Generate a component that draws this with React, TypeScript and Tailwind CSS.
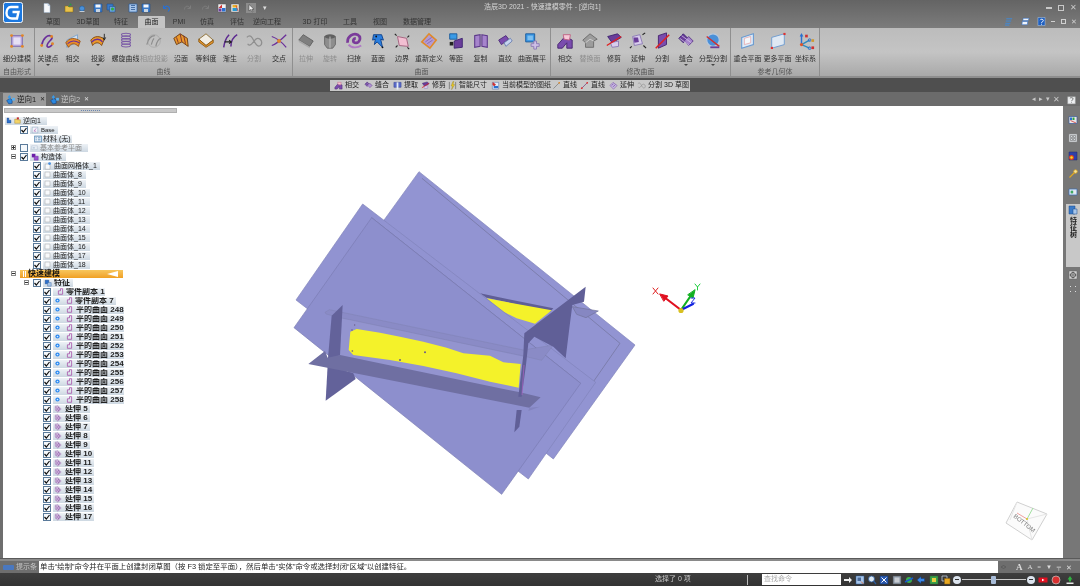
import React from "react";

const P = (d: string, fill: string, stroke = "none", sw = 1) => <path d={d} fill={fill} stroke={stroke} strokeWidth={sw} />;

const icons: Record<string, React.ReactNode> = {
  subd: <>{P("M4 4H16V16H4Z", "#b9a9dc", "#7f6fae")}{P("M6 6H14V14H6Z", "#e6e0f4")}<circle cx="4" cy="4" r="1.6" fill="#e0852a" /><circle cx="16" cy="4" r="1.6" fill="#e0852a" /><circle cx="4" cy="16" r="1.6" fill="#e0852a" /><circle cx="16" cy="16" r="1.6" fill="#e0852a" /></>,
  keypt: <>{P("M3 15C4 7 10 2 14 5C17 8 8 11 9 16C10 18 14 16 15 13", "none", "#6a2f9a", 1.8)}<circle cx="3" cy="15" r="1.6" fill="#e0852a" /><circle cx="14" cy="5" r="1.6" fill="#e0852a" /><circle cx="15" cy="13" r="1.6" fill="#e0852a" /></>,
  inter: <>{P("M3 9L15 3V11L3 17Z", "#cfe0f2", "#7ea2c8")}{P("M2 12C6 6 12 6 18 10L16 16C12 12 8 12 5 17Z", "#e98d2b", "#9a5312")}{P("M4 13C8 9 12 9 17 12", "none", "#6a2f9a", 1.2)}</>,
  proj: <>{P("M2 9C6 4 12 4 17 8L14 15C11 11 7 11 4 15Z", "#e9982b", "#7a4510")}{P("M3 11C7 7 12 7 15 11", "none", "#6a2f9a", 1.6)}{P("M17 2V8M15.5 6L17 9L18.5 6", "none", "#222", 1)}</>,
  helix: <>{[3, 6, 9, 12, 15].map((y) => <ellipse key={y} cx="10" cy={y} rx="5" ry="1.6" fill="none" stroke="#7a5aa6" strokeWidth="1.2" />)}</>,
  gproj: <>{P("M2 14C4 6 8 4 11 4M12 16C13 10 16 7 18 7M7 14C8 10 9 8 10 7", "none", "#8c8c8c", 1.3)}<circle cx="10" cy="10" r="7" fill="none" stroke="#a0a0a0" strokeWidth="0.7" /></>,
  along: <>{P("M2 7L9 2L17 7L18 16L11 11L5 14Z", "#e9982b", "#6b3a10")}{P("M9 2L11 11M5 6L7 12M13 4L15 13", "none", "#7a2f2f", 1)}</>,
  slope: <>{P("M2 8L10 2L18 9L10 15Z", "#f1ede4", "#8a6a30")}{P("M2 11L10 17L18 12L18 9L10 15L2 8Z", "#e9982b", "#8a5a18")}</>,
  invol: <>{P("M3 17C4 10 6 6 9 3M11 16C11 10 13 6 18 3", "none", "#5d2a90", 1.7)}{P("M4 11H11M9 9L11.5 11L9 13", "none", "#222", 1.2)}</>,
  gsplit: <>{P("M2 6C6 2 8 6 10 10C12 14 15 18 18 14C20 10 15 4 11 9C8 13 5 17 3 13", "none", "#8f8f8f", 1.4)}</>,
  cross: <>{P("M2 15C8 13 13 8 18 3M2 5C8 7 13 11 18 17", "none", "#6a2f9a", 1.4)}<circle cx="10" cy="10" r="2.2" fill="#e0852a" /></>,
  extr: <>{P("M2 9L7 3L18 10L14 16Z", "#7f7f7f", "#5f5f5f")}{P("M2 9L14 16V18L2 11Z", "#a9a9a9")}</>,
  rev: <>{P("M4 5H16V14L13 18H7L4 14Z", "#8d8d8d", "#666")}<ellipse cx="10" cy="5" rx="6" ry="2.5" fill="#5f5f5f" />{P("M10 5V18", "none", "#c4c4c4")}</>,
  sweep: <>{P("M3 12C2 5 9 1 14 3C19 6 16 13 11 12C8 11 9 7 12 7", "none", "#7a3a9a", 3)}{P("M4 14C7 18 14 18 18 15", "none", "#b07ac4", 2)}</>,
  blue: <>{P("M5 3H14L16 9L13 8L15 17L9 11L6 14L7 8L4 9Z", "#2a7fe0", "#0c3f8a")}<circle cx="8" cy="5" r="1" fill="#111" /><circle cx="15" cy="17" r="1" fill="#111" /></>,
  bound: <>{P("M5 5L15 7L17 16L7 15Z", "#f2bfd2", "#a0607c")}{P("M2 2L4 4M18 4L16 6M18 19L16 17M3 17L5 15", "none", "#222", 1.2)}</>,
  redef: <>{P("M10 2L18 9L11 18L2 11Z", "#b29ad4", "#e08a2a", 1.8)}{P("M6 11L13 6M8 13L14 9", "none", "#7a5aa6", 0.8)}</>,
  offset: <>{P("M3 2H11V8H3Z", "#3b9be6", "#1a5a9a")}{P("M8 10L17 7V17L8 18Z", "#6a3d9a", "#3c2270")}{P("M3 11H7V15H3Z", "#222")}</>,
  copy: <>{P("M3 4L9 3V16L3 17Z", "#a684cc", "#5d3a8a", 1.2)}{P("M11 3L17 4V17L11 16Z", "#a684cc", "#5d3a8a", 1.2)}</>,
  ruled: <>{P("M3 9L11 4L14 8L6 14Z", "#7a4cae", "#4c2a78")}{P("M9 12L16 7L18 10L11 16Z", "#c7d4ef", "#6b7fb0")}</>,
  flat: <>{P("M3 2H13V11H3Z", "#3a97e4", "#1a5a9a")}{P("M5 4H11V9H5Z", "#7ec0f0")}{P("M9 13H12V10H15V13H18V16H15V19H12V16H9Z", "#cdbfe6", "#8a78b4")}</>,
  minter: <>{P("M2 14L10 5L18 9L18 18L12 18L12 12L7 18H2Z", "#7a4cae", "#45246e")}{P("M8 3L16 3L15 9L9 8Z", "#f6c9d8", "#c06080")}</>,
  gface: <>{P("M2 9L10 2L18 8L14 10V17L5 17V12Z", "#9c9c9c", "#6a6a6a")}{P("M5 12L10 8L14 10", "none", "#d0d0d0")}</>,
  trim: <>{P("M3 5L14 2L18 6L8 12Z", "#6a3d9a", "#3c2270")}{P("M6 12L15 10V16L8 17Z", "#d8cdec", "#8a78b4")}{P("M2 15L18 5", "none", "#e02020", 1.6)}</>,
  ext: <>{P("M4 5L12 3L15 13L6 15Z", "#d8cdec", "#8a78b4")}{P("M5 6H10L11 11L6 12Z", "#6a3d9a")}{P("M15 3L18 1M16 15L19 18M3 16L1 18", "none", "#222", 1.2)}</>,
  split: <>{P("M6 4L15 1V14L6 18Z", "#7a4cae", "#45246e")}{P("M3 18L18 3", "none", "#e02020", 1.7)}</>,
  sew: <>{P("M2 7L7 2L12 7L7 12Z", "#6a3d9a", "#3c2270")}{P("M8 10L13 5L18 10L13 15Z", "#a684cc", "#5d3a8a")}{P("M5 4L16 12M3 7L14 15", "none", "#d8cdec", 0.8)}</>,
  part: <><ellipse cx="10" cy="9" rx="7" ry="7" fill="#4a90d8" stroke="#b8c8dc" strokeWidth="1.4" />{P("M3 5L17 16", "none", "#d03030", 1.6)}{P("M7 16H17V18H7Z", "#6a3d9a")}</>,
  plane1: <>{P("M3 6L16 2V14L3 18Z", "#dceaf8", "#6a9ad0", 1.2)}{P("M6 7L13 5V12L6 14Z", "#f4f7fb", "#e8a0a0", 0.8)}</>,
  plane2: <>{P("M3 6L17 2V14L3 18Z", "#dfe8f2", "#6a9ad0", 1)}<rect x="2" y="16.5" width="2.4" height="2.4" fill="#e03030" /><rect x="16" y="1" width="2.4" height="2.4" fill="#e03030" /></>,
  axes: <>{P("M5 14V3", "none", "#2a70d0", 1.6)}{P("M3 5L5 1L7 5Z", "#2a70d0")}{P("M5 14L14 9", "none", "#2a8ac0", 1.4)}{P("M5 14L14 18", "none", "#2a8ac0", 1.4)}<circle cx="5" cy="14" r="1.8" fill="#e0552a" /><circle cx="14" cy="9" r="1.5" fill="none" stroke="#2a70d0" /><circle cx="14" cy="18" r="1.5" fill="none" stroke="#2a70d0" />{P("M9 3H12V6H9Z", "#d03030")}{P("M16 8H19V11H16Z", "#d09a30")}{P("M16 16H19V19H16Z", "#d03030")}</>,
  doc: <>{P("M4 1H12L16 5V19H4Z", "#f6f8fb", "#9fb4cc")}{P("M12 1V5H16", "#c8d8ea", "#9fb4cc")}</>,
  folder: <>{P("M2 6H8L10 8H18V18H2Z", "#e9c24a", "#8a6a10")}{P("M9 8L14 2M14 2L11 2M14 2V5", "none", "#20a040", 1.5)}</>,
  globe: <><circle cx="10" cy="11" r="5" fill="#4a90d8" stroke="#1c5a9c" />{P("M5 16H15V18H5Z", "#c4ccd4")}</>,
  save: <>{P("M2 2H18V18H2Z", "#3a7ac8", "#1a4a88")}{P("M5 3H15V9H5Z", "#f4f7fb")}{P("M6 12H14V18H6Z", "#c8d4e2")}</>,
  saveall: <>{P("M2 2H14V14H2Z", "#3a7ac8", "#1a4a88")}{P("M7 7H18V18H7Z", "#6aa2de", "#1a4a88")}<circle cx="13" cy="12" r="3" fill="#30b040" /></>,
  panel: <>{P("M2 2H18V18H2Z", "#a8c6ea", "#2a5a9a", 1.4)}{P("M6 5H14M6 9H14M6 13H14", "none", "#1c4a88", 1.4)}</>,
  undo: <>{P("M3 5V11H9", "none", "#2a70d0", 2)}{P("M4 10C8 4 15 6 15 13L12 17", "none", "#2a70d0", 2.4)}</>,
  redoG: <>{P("M17 5V11H11M16 10C12 4 5 6 5 13", "none", "#7f7f7f", 1.8)}</>,
  img1: <>{P("M2 2H18V18H2Z", "#f0f0f0", "#555")}{P("M3 10L10 3V10Z", "#d03030")}{P("M10 10H17V17H10Z", "#2a70d0")}{P("M3 11H9V17H3Z", "#6a3d9a")}</>,
  img2: <>{P("M2 2H18V18H2Z", "#f0f0f0", "#555")}{P("M5 4H15V9H5Z", "#e9b02a")}{P("M5 10H15V16H5Z", "#2a9ad0")}{P("M12 5L16 16", "none", "#d03030", 1.5)}</>,
  pointer: <>{P("M6 3V16L9.5 13L12 18L14 17L11.5 12.5H16Z", "#f4f4f4", "#333")}</>,
  line1: <>{P("M3 17L17 3", "none", "#8a8a8a", 2)}<circle cx="16" cy="4" r="2" fill="#e08a2a" /></>,
  line2: <>{P("M3 17L17 3", "none", "#8a5a8a", 2)}<circle cx="4" cy="16" r="2" fill="#e03030" /><circle cx="16" cy="4" r="2" fill="#e03030" /></>,
  extMini: <>{P("M2 10L9 3L18 10L10 18Z", "#c7b8e2", "#6a3d9a")}{P("M6 10L10 6M9 13L14 8", "none", "#6a3d9a", 1.5)}</>,
  smart: <>{P("M3 2V18M17 2V18", "none", "#555", 1.3)}{P("M11 1L7 11H10L8 19L15 8H11L13 1Z", "#f0d020", "#806a10", 0.7)}</>,
  sheet: <>{P("M3 3H17V18H3Z", "#e4ecf6", "#3a5a9a")}{P("M4 2L11 8L7 12L3 8Z", "#d03030")}{P("M6 11H16V16H6Z", "#2a70d0")}</>,
  extract: <>{P("M2 3H18V14H2Z", "#5a6ac8", "#2a3a8a")}{P("M8 3V19H12V3Z", "#e4ecf6")}</>,
  treeBlue: <>{P("M3 3H8V9H14V17H3Z", "#2a70d0", "#123a7a")}</>,
  treeFolder: <>{P("M2 6H8L10 8H18V18H2Z", "#f4d468", "#8a6a10")}{P("M8 1H14V7H8Z", "#c03030")}</>,
  base: <>{P("M3 3H17V17H3Z", "#f4f7fb", "#6a8ab0")}{P("M7 13L13 6M13 13H8", "none", "#a040a0", 1.4)}</>,
  mat: <>{P("M1 3H19V17H1Z", "#e4ecf6", "#2a6aa0", 1.5)}{P("M4 7H7M4 12H7M10 7H16M10 12H16", "none", "#2a6aa0", 1.5)}</>,
  refp: <>{P("M2 5H18V16H2Z", "#e8eef4", "#9fb0c4")}{P("M5 9H11V13H5Z", "#b8c8da")}</>,
  build: <>{P("M2 2H11V11H2Z", "#6a1fa8")}{P("M8 8H18V18H8Z", "#9a50d0", "#5a1a8a")}</>,
  face: <>{P("M3 3H17V17H3Z", "#f8fafc", "#9a9a9a", 1.2)}</>,
  mesh: <>{P("M3 5H15V18H3Z", "#f8fafc", "#9a9a9a", 1.2)}<circle cx="14" cy="4" r="3.5" fill="#4a90e0" /></>,
  feat: <>{P("M3 3H12V12H3Z", "#2a70d0", "#123a7a")}{P("M9 9H18V18H9Z", "#a8c6ea", "#2a5a9a")}</>,
  eye: <><circle cx="10" cy="10" r="6" fill="#2a88f0" /><circle cx="10" cy="10" r="2.4" fill="#d8ecff" /></>,
  partc: <>{P("M4 8H10V2H16V18H4Z", "none", "#a040a0", 2)}</>,
  extTree: <>{P("M3 3L10 2L18 10L10 18L3 12Z", "#d4c0e0", "#8a5aa0")}{P("M5 6L9 10L5 14M10 5L14 10L10 15", "none", "#7a3a9a", 1.6)}</>,
  side1: <>{P("M2 3H18V17H2Z", "#e8e8e8", "#3a5a9a", 1.4)}{P("M4 5H8V10H4Z", "#2a70d0")}{P("M9 5H13V10H9Z", "#30a040")}{P("M5 11L16 16", "none", "#d03030", 1.5)}</>,
  side2: <>{P("M2 2H18V18H2Z", "#d8dce0", "#8a8a8a")}{P("M5 5H9V9H5ZM11 5H15V9H11ZM5 11H9V15H5ZM11 11H15V15H11Z", "none", "#707070", 1.2)}</>,
  side3: <>{P("M2 2H18V18H2Z", "#3040a8", "#20286a")}<circle cx="7" cy="13" r="5" fill="#e04020" /><circle cx="7" cy="13" r="2.5" fill="#f0e020" /></>,
  key: <>{P("M3 17L13 7", "none", "#e0a820", 2.5)}<circle cx="15" cy="5" r="3.5" fill="#f4e4a0" stroke="#e0a820" strokeWidth="1.6" /></>,
  side5: <>{P("M2 4H18V16H2Z", "#cfe0f2", "#3a6ab0", 1.4)}<circle cx="8" cy="10" r="3" fill="#40a860" />{P("M11 7H16V13H11Z", "#e8e8f0")}</>,
  sideTree: <>{P("M2 2H14V18H2Z", "#3a7ac8", "#1a4a88")}{P("M10 8H18V18H10Z", "#a8c6ea", "#1a4a88")}</>,
  help: <>{P("M3 5H17V18H3Z", "#eef0f2", "#999")}{P("M7 8C8 6 13 6 13 9C13 11 10 11 10 13M10 15V16", "none", "#666", 1.6)}</>,
  helpBlue: <>{P("M2 1H18V19H2Z", "#2060c0", "#c8d8ea")}{P("M7 7C8 4 14 4 14 8C14 11 10 10 10 13M10 15V17", "none", "#fff", 2)}</>,
  lines: <>{P("M5 4H18M4 9H16M3 14H14M2 18H12", "none", "#3a8ae0", 2)}</>,
  lines2: <>{P("M5 3H18L16 8H4ZM3 10H15L14 17H2Z", "#f0f4fa", "#2a70d0", 1.2)}</>,
  sideGrid: <>{P("M2 2H18V18H2Z", "#d4d4d4", "#666")}<circle cx="10" cy="10" r="5" fill="none" stroke="#333" strokeWidth="1.5" />{P("M10 3V17M3 10H17", "none", "#333", 1)}</>,
  s1: <>{P("M2 8H12V4L18 10L12 16V12H2Z", "#f2f2f2")}</>,
  s2: <>{P("M2 2H18V18H2Z", "#a8c6ea", "#2a5a9a")}{P("M5 5H12V12H5Z", "#4a6a9a")}{P("M12 13L17 18", "none", "#e06020", 1.6)}</>,
  s3: <><circle cx="9" cy="8" r="6" fill="#dce8f4" stroke="#2a5a9a" strokeWidth="1.6" />{P("M13 12L18 18", "none", "#2a5a9a", 2.4)}</>,
  s4: <>{P("M2 2H18V18H2Z", "#2a5ab0", "#123a7a")}{P("M5 5L15 15M15 5L5 15", "none", "#fff", 2)}</>,
  s5: <>{P("M2 2H18V18H2Z", "#8a98a8", "#555")}{P("M5 5H15V15H5Z", "#c8ccd2")}</>,
  s6: <><circle cx="10" cy="10" r="6" fill="#3ab04a" />{P("M2 14L18 6", "none", "#1a5ad0", 3)}</>,
  s7: <>{P("M2 10L10 3V7H17V13H10V17Z", "#3a88e8", "#123a7a")}</>,
  s8: <>{P("M2 2H18V18H2Z", "#3aa04a", "#2a6a30")}{P("M6 6H14V14H6Z", "#e8d040")}</>,
  s9: <>{P("M2 2H12V12H2Z", "none", "#c8d4e2", 1.5)}{P("M7 7H18V18H7Z", "#e8a820", "#8a6010")}</>,
  recY: <>{P("M1 5H19V15H1Z", "#e01020")}{P("M8 7.5L13 10L8 12.5Z", "#fff")}</>,
  recR: <><circle cx="10" cy="10" r="8" fill="#d83030" stroke="#c8c8c8" strokeWidth="1.4" /></>,
  up: <>{P("M10 2L15 9H12V13H8V9H5Z", "#30b040")}{P("M3 15H17V18H3Z", "#e8e8e8")}</>,
  docTab: <>{P("M3 12L9 8L13 11V17L7 18Z", "#2a88e0", "#123a7a")}{P("M8 2L11 6L8 9L5 6Z", "#3a9ae8")}{P("M13 7H18V12H13Z", "#5ab0f0")}</>,
};

const Ic = ({ k, s = 18 }: { k: string; s?: number }) => (
  <svg width={s} height={s} viewBox="0 0 20 20" className="shrink-0">{icons[k]}</svg>
);

type Item = { k: string; t: string; w: string; off?: boolean; arrow?: boolean };
type Group = { label: string; w: string; items: Item[] };

const groups: Group[] = [
  { label: "自由形式", w: "w-[35px]", items: [{ k: "subd", t: "细分建模", w: "w-[32px]" }] },
  {
    label: "曲线",
    w: "w-[258px]",
    items: [
      { k: "keypt", t: "关键点", w: "w-[24px]", arrow: true },
      { k: "inter", t: "相交", w: "w-[25px]" },
      { k: "proj", t: "投影", w: "w-[26px]", arrow: true },
      { k: "helix", t: "螺旋曲线", w: "w-[29px]" },
      { k: "gproj", t: "相应投影", w: "w-[28px]", off: true },
      { k: "along", t: "沿面", w: "w-[26px]" },
      { k: "slope", t: "等斜度", w: "w-[24px]" },
      { k: "invol", t: "渐生", w: "w-[24px]" },
      { k: "gsplit", t: "分割", w: "w-[24px]", off: true },
      { k: "cross", t: "交点", w: "w-[26px]" },
    ],
  },
  {
    label: "曲面",
    w: "w-[258px]",
    items: [
      { k: "extr", t: "拉伸", w: "w-[24px]", off: true },
      { k: "rev", t: "旋转", w: "w-[24px]", off: true },
      { k: "sweep", t: "扫掠", w: "w-[24px]" },
      { k: "blue", t: "蓝面", w: "w-[24px]" },
      { k: "bound", t: "边界", w: "w-[24px]" },
      { k: "redef", t: "重新定义", w: "w-[30px]" },
      { k: "offset", t: "等距", w: "w-[24px]" },
      { k: "copy", t: "复制", w: "w-[25px]" },
      { k: "ruled", t: "直纹", w: "w-[24px]" },
      { k: "flat", t: "曲面展平", w: "w-[30px]" },
    ],
  },
  {
    label: "修改曲面",
    w: "w-[180px]",
    items: [
      { k: "minter", t: "相交", w: "w-[26px]" },
      { k: "gface", t: "替换面", w: "w-[24px]", off: true },
      { k: "trim", t: "修剪", w: "w-[24px]" },
      { k: "ext", t: "延伸", w: "w-[24px]" },
      { k: "split", t: "分割", w: "w-[24px]" },
      { k: "sew", t: "缝合", w: "w-[24px]", arrow: true },
      { k: "part", t: "分型分割", w: "w-[30px]", arrow: true },
    ],
  },
  {
    label: "参考几何体",
    w: "w-[89px]",
    items: [
      { k: "plane1", t: "重合平面", w: "w-[31px]" },
      { k: "plane2", t: "更多平面", w: "w-[29px]" },
      { k: "axes", t: "坐标系", w: "w-[27px]" },
    ],
  },
];

const tabs = [
  { t: "草图", c: "ml-[4px] w-[18px]" },
  { t: "3D草图", c: "w-[52px]" },
  { t: "特征", c: "w-[14px]" },
  { t: "曲面", c: "ml-[10px] w-[27px] bg-[#c4c4c4] text-[#222] rounded-t-[1px]" },
  { t: "PMI", c: "w-[28px]" },
  { t: "仿真", c: "w-[28px]" },
  { t: "评估", c: "w-[32px]" },
  { t: "逆向工程", c: "w-[28px]" },
  { t: "3D 打印", c: "ml-[9px] w-[50px]" },
  { t: "工具", c: "w-[20px]" },
  { t: "视图", c: "ml-[10px] w-[20px]" },
  { t: "数据管理", c: "w-[54px]" },
];

const qa = [
  { k: "doc", c: "ml-[2px]" }, { k: "folder", c: "ml-[12px]" }, { k: "globe", c: "ml-[3px]" }, { k: "save", c: "ml-[6px]" },
  { k: "saveall", c: "ml-[3px]" }, { k: "panel", c: "ml-[12px]" }, { k: "save", c: "ml-[3px]" }, { k: "undo", c: "ml-[11px]" },
  { k: "redoG", c: "ml-[10px]" }, { k: "redoG", c: "ml-[8px]" }, { k: "img1", c: "ml-[7px]" }, { k: "img2", c: "ml-[3px]" },
  { k: "pointer", c: "ml-[6px] bg-[#8c8c8c]" },
];

const tools = [
  { k: "minter", t: "相交", w: "w-[30px]" },
  { k: "sew", t: "缝合", w: "w-[29px]" },
  { k: "extract", t: "提取", w: "w-[28px]" },
  { k: "trim", t: "修剪", w: "w-[27px]" },
  { k: "smart", t: "智能尺寸", w: "w-[43px]" },
  { k: "sheet", t: "当前模型的图纸", w: "w-[61px]" },
  { k: "line1", t: "直线", w: "w-[28px]" },
  { k: "line2", t: "直线", w: "w-[29px]" },
  { k: "extMini", t: "延伸", w: "w-[28px]" },
  { k: "gsplit", t: "分割", w: "w-[27px]" },
];

const Check = ({ on = true }: { on?: boolean }) => (
  <span className="flex h-[8px] w-[8px] shrink-0 items-center justify-center border border-[#5a7a9a] bg-[#f6f9fc]">
    {on && (
      <svg width="6" height="6" viewBox="0 0 6 6">
        <path d="M0.5 3L2.3 5L5.5 1" fill="none" stroke="#111" strokeWidth="1.2" />
      </svg>
    )}
  </span>
);

const Exp = ({ plus }: { plus?: boolean }) => (
  <span className="relative mr-[4px] flex h-[5px] w-[5px] shrink-0 items-center justify-center border border-[#8a8a8a] bg-white">
    <span className="h-px w-[3px] bg-[#333]" />
    {plus && <span className="absolute h-[3px] w-px bg-[#333]" />}
  </span>
);

const pill = "flex h-[8px] items-center gap-[1px] overflow-hidden whitespace-nowrap bg-gradient-to-b from-[#eef2f6] to-[#cdd8e2] leading-[8px]";

const Row = ({ pl, children }: { pl: string; children: React.ReactNode }) => (
  <div className={`flex h-[9px] items-center ${pl}`}>{children}</div>
);

const surfaces = ["8", "9", "10", "11", "12", "13", "14", "15", "16", "17", "18"];
const planes = ["248", "249", "250", "251", "252", "253", "254", "255", "256", "257", "258"];
const exts = ["5", "6", "7", "8", "9", "10", "11", "12", "13", "14", "15", "16", "17"];

const Tree = () => (
  <div className="flex-col text-[7px] text-[#222]">
    <Row pl="pl-[2px]">
      <span className={`${pill} w-[42px] pl-[1px]`}><Ic k="treeBlue" s={7} /><Ic k="treeFolder" s={7} /><span className="ml-[1px]">逆向1</span></span>
    </Row>
    <Row pl="pl-[17px]">
      <Check />
      <span className={`${pill} ml-[2px] w-[28px] pl-[1px] text-[6px]`}><Ic k="base" s={8} /><span className="ml-[1px]">Base</span></span>
    </Row>
    <Row pl="pl-[31px]">
      <span className={`${pill} w-[38px]`}><Ic k="mat" s={8} /><span>材料 (无)</span></span>
    </Row>
    <Row pl="pl-[8px]">
      <Exp plus /><Check on={false} />
      <span className={`${pill} ml-[2px] w-[58px] pl-[1px] text-[#888]`}><Ic k="refp" s={7} /><span className="ml-[1px]">基本参考平面</span></span>
    </Row>
    <Row pl="pl-[8px]">
      <Exp /><Check />
      <span className={`${pill} ml-[2px] w-[36px] pl-[1px]`}><Ic k="build" s={8} /><span className="ml-[1px]">构造体</span></span>
    </Row>
    <Row pl="pl-[30px]">
      <Check />
      <span className={`${pill} ml-[2px] w-[57px] pl-[1px]`}><Ic k="mesh" s={8} /><span className="ml-[1px]">曲面网格体_1</span></span>
    </Row>
    {surfaces.map((n) => (
      <Row key={n} pl="pl-[30px]">
        <Check />
        <span className={`${pill} ml-[2px] ${n.length > 1 ? "w-[47px]" : "w-[43px]"} pl-[1px]`}><Ic k="face" s={7} /><span className="ml-[1px]">曲面体_{n}</span></span>
      </Row>
    ))}
    <Row pl="pl-[8px]">
      <Exp />
      <span className="flex h-[8px] w-[103px] items-center bg-gradient-to-b from-[#f7c65c] to-[#f0a020] pl-[3px] text-[8px] leading-[8px] font-bold text-[#111]">
        <span className="mr-[2px] h-[6px] w-[3px] border-x border-white" />
        <span>快速建模</span>
        <svg width="11" height="6" viewBox="0 0 11 6" className="ml-auto mr-[5px]"><path d="M0 3L11 0V6Z" fill="#fff" /></svg>
      </span>
    </Row>
    <Row pl="pl-[21px]">
      <Exp /><Check />
      <span className={`${pill} ml-[2px] w-[30px] pl-[1px] text-[8px] font-bold`}><Ic k="feat" s={8} /><span className="ml-[1px]">特征</span></span>
    </Row>
    <Row pl="pl-[40px]">
      <Check />
      <span className={`${pill} ml-[2px] w-[52px] pl-[4px] text-[8px] font-bold`}><Ic k="partc" s={7} /><span className="ml-[1px]">零件副本 1</span></span>
    </Row>
    <Row pl="pl-[40px]">
      <Check />
      <span className={`${pill} ml-[2px] w-[63px] pl-[1px] text-[8px] font-bold`}><Ic k="eye" s={7} /><span className="ml-[4px]"><Ic k="partc" s={7} /></span><span className="ml-[1px]">零件副本 7</span></span>
    </Row>
    {planes.map((n) => (
      <Row key={n} pl="pl-[40px]">
        <Check />
        <span className={`${pill} ml-[2px] w-[71px] pl-[1px] text-[8px] font-bold`}><Ic k="eye" s={7} /><span className="ml-[4px] flex"><Ic k="partc" s={7} /></span><span className="ml-[2px]">平的曲面 {n}</span></span>
      </Row>
    ))}
    {exts.map((n) => (
      <Row key={n} pl="pl-[40px]">
        <Check />
        <span className={`${pill} ml-[2px] ${n.length > 1 ? "w-[41px]" : "w-[37px]"} pl-[1px] text-[8px] font-bold`}><Ic k="extTree" s={8} /><span className="ml-[2px]">延伸 {n}</span></span>
      </Row>
    ))}
  </div>
);

const Scene = () => (
  <svg width="885" height="452" viewBox="178 106 885 452" className="block">
    <g transform="translate(290 165) scale(0.33333)" strokeLinejoin="round">
      <path d="M387 20L1035 540L790 882L140 362Z" fill="#9294d2" stroke="#8183ba" strokeWidth="2" />
      <path d="M396 40L990 535L775 845" fill="none" stroke="#71729a" strokeWidth="2" />
      <path d="M570 385L790 430L780 440L590 398Z" fill="#5f5e96" />
      <path d="M590 400L785 436L735 476L680 460L640 440Z" fill="#f4f22a" />
      <path d="M847 425L925 438L888 458L860 448Z" fill="#8687c2" stroke="#71729a" strokeWidth="2" />
      <path d="M218 117L917 652L715 942L18 405Z" fill="#9193d1" stroke="#8183ba" strokeWidth="2" />
      <path d="M245 158L872 655" fill="none" stroke="#71729a" strokeWidth="2" />
      <path d="M245 158L12 488L635 988L872 655Z" fill="#8d8fcd" stroke="#7a7cb2" strokeWidth="2" />
      <path d="M107 707L113 600L190 625L197 642Z" fill="#63629a" />
      <path d="M155 455L700 575L690 690L150 570Z" fill="#9394cf" />
      <path d="M181 500L200 492L270 503L330 515L400 530L470 548L520 565L600 572L640 592L692 597L686 668L600 650L500 625L400 603L300 585L190 570L176 555Z" fill="#f4f22a" />
      <g fill="#6a5a8a">
        <circle cx="186" cy="495" r="2.5" /><circle cx="187" cy="558" r="2.5" /><circle cx="330" cy="585" r="3" /><circle cx="405" cy="562" r="3" /><circle cx="194" cy="480" r="2" />
      </g>
      <path d="M105 442L118 434L700 555L790 540L755 586L700 573L150 458L108 447Z" fill="#8a8bc6" stroke="#7a7ba8" strokeWidth="1" />
      <path d="M125 452L158 420L150 570L113 590Z" fill="#63629a" />
      <path d="M55 597L105 558L113 578L150 570L690 682L752 697L718 728Z" fill="#6f6fa2" />
      <path d="M718 728L750 725L715 738Z" fill="#8384bf" />
      <path d="M703 505L887 365L882 410L847 420L838 490L827 580L790 545L733 515L715 535L708 600L695 695L685 695L700 570Z" fill="#605f97" />
      <path d="M680 735L695 735L688 785L673 802Z" fill="#605f97" />
      <path d="M702 600L696 690" fill="none" stroke="#c860d0" strokeWidth="1.5" />
    </g>
    <g fill="none" strokeLinecap="round">
      <path d="M681 310L664 297" stroke="#e01020" strokeWidth="2.2" />
      <path d="M660 294L668 296L664 301Z" fill="#e01020" stroke="#e01020" />
      <path d="M681 310L692 294" stroke="#10b020" strokeWidth="2.2" />
      <path d="M695 290L693 298L688 295Z" fill="#10b020" stroke="#10b020" />
      <path d="M681 310L693 304" stroke="#1020e0" strokeWidth="2.2" />
      <path d="M653 288L658 294M658 288L653 294" stroke="#e02020" />
      <path d="M695 284L697.5 287L700 284M697.5 287V290" stroke="#20d040" />
      <path d="M691 298H695L691 303H695" stroke="#2030e0" />
    </g>
    <circle cx="681" cy="310.5" r="2.6" fill="#d8c020" />
    <g fill="none">
      <path d="M1017 502L1047 514L1032 540L1006 523Z" fill="#fbfbfb" stroke="#d0d0d0" />
      <path d="M1017 502L1010 520M1027 519L1047 514M1027 519L1032 540" stroke="#e6e6e6" />
      <path d="M1027 519L1017 513" stroke="#f0a0a0" />
      <path d="M1027 519L1033 508" stroke="#a0e0a0" />
      <circle cx="1027" cy="519" r="1" fill="#d8c020" />
    </g>
    <text x="0" y="0" transform="translate(1013 517) rotate(38)" fontSize="6" fill="#777" fontFamily="'Liberation Sans'">BOTTOM</text>
  </svg>
);

const side = ["side1", "side2", "side3", "key", "side5"];
const status = [
  { k: "s1", c: "ml-[2px]" }, { k: "s2", c: "ml-[2px]" }, { k: "s3", c: "ml-[2px]" }, { k: "s4", c: "ml-[2px]" }, { k: "s5", c: "ml-[3px]" },
  { k: "s6", c: "ml-[2px]" }, { k: "s7", c: "ml-[2px]" }, { k: "s8", c: "ml-[3px]" }, { k: "s9", c: "ml-[2px]" },
];

export default function App() {
  return (
    <div className="flex h-[586px] w-[1080px] flex-col overflow-hidden bg-[#6e6e6e] [font-family:'Liberation_Sans','Noto_Sans_CJK_SC',sans-serif] blur-[0.35px]">
      {/* header */}
      <div className="flex h-[28px] bg-gradient-to-b from-[#646464] to-[#7c7c7c]">
        <div className="w-[40px] pl-[3px] pt-[2px]">
          <svg width="20" height="21" viewBox="0 0 20 21">
            <rect x="0.5" y="0.5" width="19" height="20" rx="2" fill="#1b78e0" stroke="#f4f8fc" />
            <path d="M15.5 5H8C5 5 3.5 8 3.5 11C3.5 14.5 6 16.5 9 16.5H14L15.5 10H9.5" fill="none" stroke="#fff" strokeWidth="2.4" />
          </svg>
        </div>
        <div className="flex min-w-0 flex-1 flex-col">
          <div className="flex h-[15px] items-center">
            <div className="flex w-[444px] items-center">
              {qa.map((q, i) => (
                <span key={i} className={`flex ${q.c}`}><Ic k={q.k} s={10} /></span>
              ))}
              <span className="ml-[7px] text-[7px] leading-none text-[#ddd]">▾</span>
            </div>
            <div className="w-[140px] whitespace-nowrap text-[7px] text-[#d4d4d4]">浩辰3D 2021 - 快速建模零件 - [逆向1]</div>
            <div className="ml-auto flex items-center gap-[6px] pr-[3px] text-[8px] leading-none text-[#c8c8c8]">
              <span className="h-[2px] w-[6px] bg-[#c8c8c8]" />
              <span className="h-[6px] w-[6px] border border-[#c8c8c8]" />
              <span>✕</span>
            </div>
          </div>
          <div className="flex h-[13px] items-end text-[7px] text-[#333]">
            {tabs.map((t) => (
              <div key={t.t} className={`flex h-[12px] items-center justify-center whitespace-nowrap ${t.c}`}>{t.t}</div>
            ))}
            <div className="ml-auto flex items-center gap-[4px] self-center pr-[3px]">
              <Ic k="lines" s={9} />
              <span className="ml-[4px] flex"><Ic k="lines2" s={9} /></span>
              <span className="ml-[3px] flex"><Ic k="helpBlue" s={9} /></span>
              <span className="ml-[1px] h-px w-[4px] bg-[#d0d0d0]" />
              <span className="ml-[2px] h-[5px] w-[5px] border border-[#d0d0d0]" />
              <span className="ml-[1px] text-[7px] leading-none text-[#d0d0d0]">✕</span>
            </div>
          </div>
        </div>
      </div>

      {/* ribbon */}
      <div className="flex h-[50px] border-b-2 border-[#8e8e8e] bg-gradient-to-b from-[#bcbcbc] via-[#c4c4c4] to-[#a9a9a9]">
        {groups.map((g) => (
          <div key={g.label} className={`flex h-full flex-col border-r border-[#8f8f8f] ${g.w}`}>
            <div className="flex h-[38px] pl-[1px]">
              {g.items.map((it) => (
                <div key={it.t + it.k} className={`flex flex-col items-center pt-[4px] ${it.w}`}>
                  <Ic k={it.k} />
                  <div className={`mt-[4px] whitespace-nowrap text-[7px] leading-[10px] ${it.off ? "text-[#8e8e8e]" : "text-[#2e2e2e]"}`}>{it.t}</div>
                  {it.arrow && <div className="mt-0 h-0 w-0 border-x-[2px] border-t-[2px] border-x-transparent border-t-[#444]" />}
                </div>
              ))}
            </div>
            <div className="flex h-[10px] items-end justify-center text-[7px] leading-[9px] text-[#555]">{g.label}</div>
          </div>
        ))}
      </div>

      {/* mini toolbar strip */}
      <div className="flex h-[14px] items-center bg-[#4f4f4f] pl-[330px]">
        <div className="flex h-[11px] w-[360px] items-center bg-[#c9c9c9] pl-[4px] text-[7px] text-[#222]">
          {tools.map((t, i) => (
            <div key={i} className={`flex items-center gap-[2px] whitespace-nowrap ${t.w}`}>
              <Ic k={t.k} s={9} />
              <span>{t.t}</span>
            </div>
          ))}
          <span className="whitespace-nowrap">3D 草图</span>
        </div>
      </div>

      {/* document tabs */}
      <div className="flex h-[14px] items-end bg-[#6b6b6b] pl-[3px] text-[7.5px]">
        <div className="flex h-[13px] w-[43px] items-center gap-[1px] bg-[#9c9c9c] pl-[2px] text-[#222]">
          <Ic k="docTab" s={11} /><span>逆向1</span><span className="ml-[3px] text-[6px]">✕</span>
        </div>
        <div className="ml-[3px] flex h-[13px] items-center gap-[1px] text-[#c4c4c4]">
          <Ic k="docTab" s={11} /><span>逆向2</span><span className="ml-[3px] text-[6px] text-[#e0e0e0]">✕</span>
        </div>
        <div className="ml-auto flex h-[13px] items-center gap-[3px] pr-[3px] text-[7px] text-[#c8c8c8]">
          <span>◂</span><span>▸</span><span>▾</span><span className="text-[8px]">✕</span>
          <span className="ml-[3px] flex"><Ic k="help" s={11} /></span>
        </div>
      </div>

      {/* main */}
      <div className="flex h-[452px]">
        <div className="ml-[3px] w-[175px] bg-white">
          <div className="mx-[1px] mt-[2px] mb-[3px] flex h-[5px] items-center justify-center gap-[1px] border border-[#b0b0b0] bg-[#c8c8c8]">
            {Array.from({ length: 10 }).map((_, i) => <span key={i} className="h-px w-px bg-[#6a86b0]" />)}
          </div>
          <Tree />
        </div>
        <div className="w-[885px] overflow-hidden bg-white">
          <Scene />
        </div>
        <div className="flex w-[17px] flex-col items-center bg-[#777] pl-[3px]">
          <div className="flex flex-col items-center gap-[8px] pt-[9px]">
            {side.map((k) => <Ic key={k} k={k} s={10} />)}
          </div>
          <div className="mt-[7px] flex h-[63px] w-[14px] flex-col items-center bg-[#c8c8c8] pt-[1px]">
            <Ic k="sideTree" s={10} />
            <span className="mt-[2px] text-[7px] leading-none font-bold text-[#222] [writing-mode:vertical-rl]">特征树</span>
          </div>
          <div className="mt-[3px] flex"><Ic k="sideGrid" s={10} /></div>
          <div className="mt-[6px] grid grid-cols-2 gap-[4px]">
            <span className="h-px w-px bg-[#ddd]" /><span className="h-px w-px bg-[#ddd]" />
            <span className="h-px w-px bg-[#ddd]" /><span className="h-px w-px bg-[#ddd]" />
          </div>
        </div>
      </div>

      {/* prompt */}
      <div className="h-[3px] border-t border-[#5a5a5a] bg-[#8a8a8a]" />
      <div className="flex h-[12px] items-center bg-[#6e6e6e] text-[7px]">
        <div className="flex w-[39px] items-center gap-[2px] pl-[3px] text-[#c4c4c4]">
          <span className="h-[5px] w-[11px] rounded-[1px] bg-[#4a78c0]" />
          <span className="whitespace-nowrap">提示条</span>
        </div>
        <div className="flex h-full w-[959px] items-center whitespace-nowrap bg-white pl-[1px] text-[7.4px] text-[#222]">
          单击“绘制”命令并在平面上创建封闭草图（按 F3 锁定至平面），然后单击“实体”命令或选择封闭“区域”以创建特征。
        </div>
        <div className="ml-[1px] flex items-center gap-[5px] pl-[2px] text-[8px] leading-none text-[#ddd]">
          <span className="flex flex-col text-[5px] leading-[5px] text-[#333]"><span>︿</span><span>﹀</span></span>
          <span className="ml-[5px] text-[9px] font-bold [font-family:'Liberation_Serif',serif]">A</span>
          <span className="text-[7px] [font-family:'Liberation_Serif',serif]">A</span>
          <span className="text-[6px]">≈</span>
          <span className="text-[6px]">▼</span>
          <span className="text-[6px]">╤</span>
          <span className="text-[7px]">✕</span>
        </div>
      </div>

      {/* status */}
      <div className="flex flex-1 items-center bg-gradient-to-b from-[#3e3e3e] to-[#333] text-[7px]">
        <span className="ml-[655px] w-[92px] whitespace-nowrap text-[#c8c8c8]">选择了 0 项</span>
        <span className="h-[10px] w-px bg-[#bbb]" />
        <div className="ml-[14px] flex h-[11px] w-[79px] items-center bg-white pl-[2px] text-[#aaa]">查找命令</div>
        <div className="flex items-center">
          {status.map((s) => <span key={s.k} className={`flex ${s.c}`}><Ic k={s.k} s={10} /></span>)}
          <span className="ml-[2px] flex h-[8px] w-[8px] items-center justify-center rounded-full bg-[#dce4ee]"><span className="h-px w-[4px] bg-[#333]" /></span>
          <span className="relative mx-[1px] flex h-[8px] w-[64px] items-center">
            <span className="h-px w-full bg-[#ccc]" />
            <span className="absolute left-[29px] h-[8px] w-[5px] rounded-[1px] bg-[#a8bcd8]" />
          </span>
          <span className="flex h-[8px] w-[8px] items-center justify-center rounded-full bg-[#dce4ee]"><span className="h-px w-[4px] bg-[#333]" /></span>
          <span className="ml-[3px] flex"><Ic k="recY" s={10} /></span>
          <span className="ml-[3px] flex"><Ic k="recR" s={10} /></span>
          <span className="ml-[4px] flex"><Ic k="up" s={10} /></span>
        </div>
      </div>
    </div>
  );
}
